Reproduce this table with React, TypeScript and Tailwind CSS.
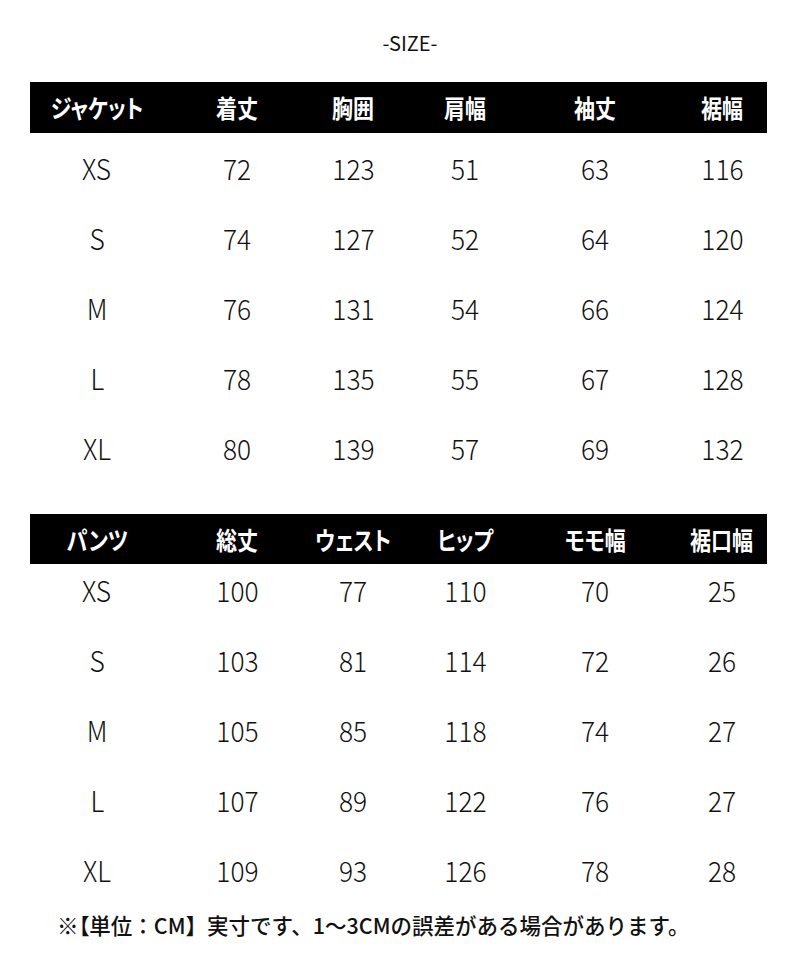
const jp = "font-['Noto_Sans_CJK_JP','Noto_Sans',sans-serif]"

interface SizeTableProps {
  headers: string[]
  rows: string[][]
  barClass: string
  bodyClass?: string
}

const cols = 'grid grid-cols-[134px_146px_86px_138px_122px_111px]'

function SizeTable({ headers, rows, barClass, bodyClass }: SizeTableProps) {
  return (
    <div>
      <div className={`${cols} ml-[30px] w-[737px] items-center bg-black text-white ${barClass}`}>
        {headers.map((h, i) => (
          <div key={h} className={`flex justify-center ${i === 5 ? 'pl-[21px]' : ''}`}>
            <span className="inline-block scale-x-[0.84] whitespace-nowrap text-[25px] font-bold leading-none [font-feature-settings:'palt']">
              {h}
            </span>
          </div>
        ))}
      </div>
      <div className={bodyClass}>
        {rows.map((r) => (
          <div key={r[0]} className={`${cols} ml-[30px] h-[70px] w-[737px] items-center`}>
            {r.map((v, i) => (
              <div key={i} className={`flex justify-center ${i === 5 ? 'pl-[21px]' : ''}`}>
                <span className="inline-block scale-x-[0.94] text-[28px] font-light leading-none text-[#111]">
                  {v}
                </span>
              </div>
            ))}
          </div>
        ))}
      </div>
    </div>
  )
}

const jacket = {
  headers: ['ジャケット', '着丈', '胸囲', '肩幅', '袖丈', '裾幅'],
  rows: [
    ['XS', '72', '123', '51', '63', '116'],
    ['S', '74', '127', '52', '64', '120'],
    ['M', '76', '131', '54', '66', '124'],
    ['L', '78', '135', '55', '67', '128'],
    ['XL', '80', '139', '57', '69', '132'],
  ],
}

const pants = {
  headers: ['パンツ', '総丈', 'ウェスト', 'ヒップ', 'モモ幅', '裾口幅'],
  rows: [
    ['XS', '100', '77', '110', '70', '25'],
    ['S', '103', '81', '114', '72', '26'],
    ['M', '105', '85', '118', '74', '27'],
    ['L', '107', '89', '122', '76', '27'],
    ['XL', '109', '93', '126', '78', '28'],
  ],
}

export default function App() {
  return (
    <div className={`${jp} h-[965px] w-[790px] bg-white pt-[31px]`}>
      <div className="flex h-[24px] items-center justify-center pl-[30px] text-[20px] font-normal text-[#111]">
        -SIZE-
      </div>
      <div className="mt-[27px]">
        <SizeTable headers={jacket.headers} rows={jacket.rows} barClass="h-[51px]" />
      </div>
      <div className="mt-[31px]">
        <SizeTable
          headers={pants.headers}
          rows={pants.rows}
          barClass="h-[50px]"
          bodyClass="-mt-[9px]"
        />
      </div>
      <div className="mt-[6px] whitespace-nowrap pl-[57px] text-[21.5px] font-medium leading-[28px] text-[#111]">
        ※<span className="[font-feature-settings:'palt']">【</span>単位：CM】実寸です、1～3CMの誤差がある場合があります。
      </div>
    </div>
  )
}
